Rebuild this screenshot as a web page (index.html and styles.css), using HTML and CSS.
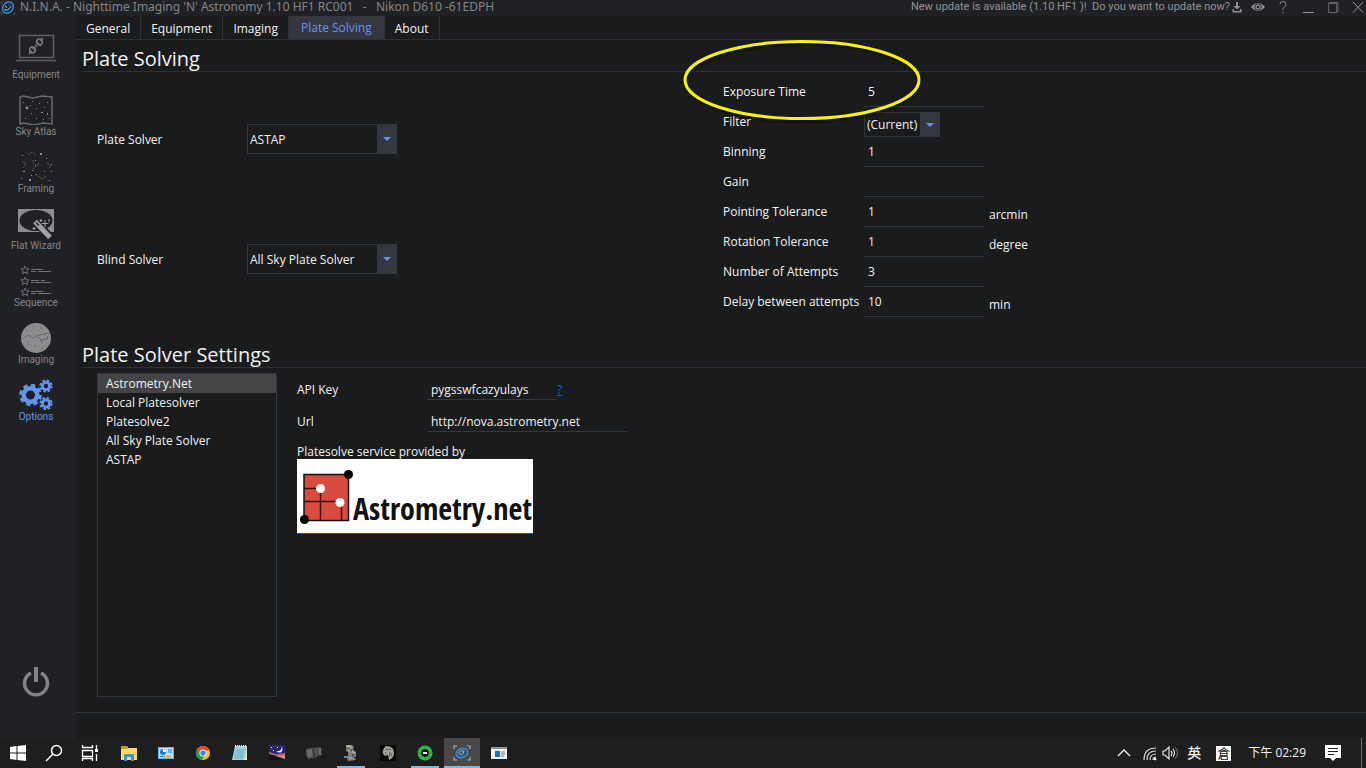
FILE: index.html
```html
<!DOCTYPE html>
<html lang="en">
<head>
<meta charset="utf-8">
<title>N.I.N.A. - Options</title>
<link rel="stylesheet" href="styles.css">
</head>
<body>
<header class="titlebar">
  <svg class="app-icon" viewBox="0 0 16 14" aria-hidden="true"><ellipse cx="8" cy="6.500" rx="5" ry="6" transform="rotate(40 8 6.500)" fill="#10283c" stroke="#3f87c6" stroke-width="1.500"/><path d="M4.500 8.500q3 2 6.500-3M5 5l2 1.500M9 3.500l1 1" stroke="#b9d8ee" fill="none"/><path d="M1 10v3h3M15 11v2h-2M1 3V1h2" stroke="#3a5163" fill="none"/></svg>
  <span class="app-title">N.I.N.A. - Nighttime Imaging 'N' Astronomy 1.10 HF1 RC001 &nbsp; - &nbsp; Nikon D610 -61EDPH</span>
  <span class="update-text">New update is available (1.10 HF1 )!&nbsp; Do you want to update now?</span>
  <button class="title-btn download" aria-label="Download update"><svg viewBox="0 0 10 12"><path d="M4 1h2v4h2.500L5 8.500 1.500 5H4zM.500 8H2v2h6V8h1.500v3.500h-9z" fill="#909193"/></svg></button>
  <div class="window-btns">
    <button class="title-btn" aria-label="Toggle theme"><svg viewBox="0 0 16 12"><path d="M1 6q7-8 14 0-7 8-14 0z" fill="#929395"/><circle cx="8" cy="6" r="3.200" fill="none" stroke="#202125"/><circle cx="8" cy="6" r="1.300" fill="#202125"/></svg></button>
    <button class="title-btn" aria-label="Help"><svg viewBox="0 0 16 12"><path d="M5 3.500Q5 .500 8 .500t3 3q0 1.500-1.700 2.700T8 9M8 10.500V12" fill="none" stroke="#8a8b8d"/></svg></button>
    <button class="title-btn" aria-label="Minimize"><svg viewBox="0 0 16 12"><path d="M3 11.500h11" stroke="#929395"/></svg></button>
    <button class="title-btn" aria-label="Restore"><svg viewBox="0 0 16 12"><path d="M3.500 2.500h8v9h-8zM3.500 2.500l1-1h8.500v9l-1.500 1M12 2.500l1-1" fill="none" stroke="#626366"/></svg></button>
    <button class="title-btn" aria-label="Close"><svg viewBox="0 0 16 12"><path d="M3 1l10 10.500M13 1L3 11.500" stroke="#929395"/></svg></button>
  </div>
</header>

<div class="workspace">
  <nav class="sidebar" aria-label="Sections">
    <button class="side-item"><svg viewBox="0 0 40 36"><path d="M3.500 3.500h34v22h-34zM0 28.500h40" fill="none" stroke="#606164" stroke-width="1.500"/><path d="M13 22l3-3M27 6l-3 3" stroke="#77787a" stroke-width="1.600"/><g fill="none" stroke="#77787a" stroke-width="1.500"><circle cx="16.500" cy="18" r="2.900"/><circle cx="23.500" cy="10" r="2.900"/></g><path d="M15 14.500l5 4.500M20 9l5 5M19 13l2 2" stroke="#77787a" stroke-width="1.200"/></svg><span>Equipment</span></button>
    <button class="side-item"><svg viewBox="0 0 40 36"><path d="M4 8l3-1 10 2 9-2 10 1v27l-9-1-9 2-10-2-4 1z" fill="none" stroke="#68696b" stroke-width="1.500"/><g fill="#8a8b8d"><circle cx="11" cy="19" r="1.400"/><path d="M7 13h1v1H7zM16 12h1v1h-1zM23 14h1v1h-1zM31 13h1v1h-1zM28 18h1v1h-1zM20 19h1v1h-1zM15 24h1v1h-1zM25 23h2v1h-2zM31 24h1v2h-1zM9 29h1v1H9zM20 29h1v1h-1zM27 30h1v1h-1zM33 29h1v1h-1zM14 16h1v1h-1z"/></g></svg><span>Sky Atlas</span></button>
    <button class="side-item"><svg viewBox="0 0 40 36"><path d="M12 9l4-3 4 3M6 15l4 3-3 4M17 17l3 3 4-3M20 20l-3 3M31 17l4 3-3 3M22 30l4 3 4-3M17 16v-2" fill="none" stroke="#626366" stroke-dasharray="2 1"/><g fill="#8d8e90"><path d="M24 7h2v2h-2zM6 9h1v1H6zM30 12h1v1h-1zM35 18h1v1h-1zM7 25h2v1H7zM16 24h1v1h-1zM28 25h1v1h-1zM35 25h1v1h-1zM5 32h1v1H5zM13 33h2v2h-2zM33 34h1v1h-1zM15 29h1v1h-1zM20 28h1v1h-1zM19 14h1v1h-1z"/></g></svg><span>Framing</span></button>
    <button class="side-item"><svg viewBox="0 0 40 36"><path d="M2 6h36v23H2z" fill="#8c8d8f"/><ellipse cx="20" cy="17.500" rx="16.500" ry="10.500" fill="#202125"/><path d="M21 20l13 14" stroke="#202125" stroke-width="8"/><path d="M19 18.500l15 16" stroke="#a1a2a3" stroke-width="5"/><path d="M20 19.500l3 3" stroke="#202125" stroke-width="1.500"/><path d="M29 17v7M25.500 20.500h7M25 16v3M23.500 17.500h3M33 16v3M18 24v3M16.500 25.500h3" stroke="#a1a2a3"/></svg><span>Flat Wizard</span></button>
    <button class="side-item"><svg viewBox="0 0 40 36"><defs><path id="star" d="M0-4l1.100 2.700 3 .2-2.300 1.900.8 2.900L0 2.200l-2.600 1.500.8-2.900-2.300-1.900 3-.2z"/></defs><g fill="none" stroke="#707173"><use href="#star" x="9" y="10"/><use href="#star" x="9" y="21"/><use href="#star" x="9" y="32"/><path d="M15 9.500h12M15 11.500h5M22 11.500h13M15 20.500h8M25 20.500h4M15 22.500h3M19 22.500h16M15 31.500h12M15 33.500h5M22 33.500h13"/></g></svg><span>Sequence</span></button>
    <button class="side-item"><svg viewBox="0 0 40 36"><circle cx="20" cy="21" r="15" fill="#8b8c8e"/><path d="M7 22l5-4 5 3 6-3 10-2M22 20l3 3 6-1 1-3M25 23l1 3M12 25v3M18 29h2M24 11h2M16 10h1M10 14h1M25 32h2" fill="none" stroke="#626366" stroke-width=".9"/></svg><span>Imaging</span></button>
    <button class="side-item is-active"><svg viewBox="0 0 40 36"><g fill="none" stroke="#6495ed"><circle cx="14.500" cy="21" r="6.800" stroke-width="4.500"/><circle cx="14.500" cy="21" r="9.800" stroke-width="3" stroke-dasharray="4.400 3.300"/><circle cx="30" cy="12" r="3.600" stroke-width="2.800"/><circle cx="30" cy="12" r="5.600" stroke-width="2" stroke-dasharray="2.500 1.900"/><circle cx="30" cy="29.500" r="3.600" stroke-width="2.800"/><circle cx="30" cy="29.500" r="5.600" stroke-width="2" stroke-dasharray="2.500 1.900"/></g></svg><span>Options</span></button>
    <button class="power" aria-label="Power"><svg viewBox="0 0 28 32"><path d="M9 7a11.500 11.500 0 1 0 10 0" fill="none" stroke="#828385" stroke-width="3.500"/><path d="M14 1v15" stroke="#828385" stroke-width="4"/></svg></button>
  </nav>

  <main class="page">
    <div class="tabs" role="tablist">
      <button class="tab" role="tab">General</button>
      <button class="tab" role="tab">Equipment</button>
      <button class="tab" role="tab">Imaging</button>
      <button class="tab is-active" role="tab" aria-selected="true">Plate Solving</button>
      <button class="tab" role="tab">About</button>
    </div>

    <section class="section">
      <h2 class="heading">Plate Solving</h2>
      <div class="solving">
        <div class="solvers">
          <div class="solver-row">
            <label for="plate-solver">Plate Solver</label>
            <span class="combo"><select id="plate-solver"><option>ASTAP</option></select></span>
          </div>
          <div class="solver-row">
            <label for="blind-solver">Blind Solver</label>
            <span class="combo"><select id="blind-solver"><option>All Sky Plate Solver</option></select></span>
          </div>
        </div>
        <div class="params">
          <div class="param"><label for="exposure">Exposure Time</label><input id="exposure" value="5"></div>
          <div class="param"><label for="filter">Filter</label><span class="combo combo-small"><select id="filter"><option>(Current)</option></select></span></div>
          <div class="param"><label for="binning">Binning</label><input id="binning" value="1"></div>
          <div class="param"><label for="gain">Gain</label><input id="gain" value=""></div>
          <div class="param"><label for="pointing">Pointing Tolerance</label><input id="pointing" value="1"><span class="unit">arcmin</span></div>
          <div class="param"><label for="rotation">Rotation Tolerance</label><input id="rotation" value="1"><span class="unit">degree</span></div>
          <div class="param"><label for="attempts">Number of Attempts</label><input id="attempts" value="3"></div>
          <div class="param"><label for="delay">Delay between attempts</label><input id="delay" value="10"><span class="unit">min</span></div>
          <svg class="callout" viewBox="0 0 242 86" aria-hidden="true"><ellipse cx="121" cy="42" rx="117" ry="38.500" fill="none" stroke="#f8f500" stroke-width="3"/></svg>
        </div>
      </div>
    </section>

    <section class="section section-fill">
      <h2 class="heading">Plate Solver Settings</h2>
      <div class="settings">
        <ul class="solver-list">
          <li class="is-selected"><button>Astrometry.Net</button></li>
          <li><button>Local Platesolver</button></li>
          <li><button>Platesolve2</button></li>
          <li><button>All Sky Plate Solver</button></li>
          <li><button>ASTAP</button></li>
        </ul>
        <div class="solver-form">
          <div class="setting"><label for="api-key">API Key</label><input class="key-input" id="api-key" value="pygsswfcazyulays"><a class="help-link" href="#">?</a></div>
          <div class="setting"><label for="url">Url</label><input class="url-input" id="url" value="http://nova.astrometry.net"></div>
          <p class="credit">Platesolve service provided by</p>
          <a class="logo" href="#">
            <svg viewBox="0 0 56 73" aria-hidden="true"><path d="M7 15.500h44.500v46H7z" fill="#d94b3e" stroke="#111" stroke-width="1.500"/><path d="M7 29.500h16M23.500 29v32M7 42.500h36M44.500 43v18" stroke="#3c0d0a" stroke-width="1.500"/><circle cx="51.500" cy="15.500" r="4.500"/><circle cx="7.500" cy="60.500" r="4.500"/><circle cx="23.500" cy="29.500" r="4.500" fill="#fff"/><circle cx="43" cy="43.500" r="4.500" fill="#fff"/></svg>
            <span>Astrometry.net</span>
          </a>
        </div>
      </div>
    </section>
    <footer class="statusbar"></footer>
  </main>
</div>

<footer class="taskbar">
  <button class="task" aria-label="Start"><svg viewBox="0 0 24 24"><path d="M4 6l6.500-1v6.500H4zM11.500 5L20 4v7.500h-8.500zM4 12.500h6.500V19L4 18zM11.500 12.500H20V20l-8.500-1z" fill="#fff"/></svg></button>
  <button class="task" aria-label="Search"><svg viewBox="0 0 24 24"><circle cx="14.500" cy="9.500" r="5" fill="none" stroke="#fff" stroke-width="1.500"/><path d="M11 13l-7 7" stroke="#fff" stroke-width="1.500"/></svg></button>
  <button class="task" aria-label="Task view"><svg viewBox="0 0 24 24"><path d="M4.500 4v2.500h10V4M4.500 9.500h10v6h-10zM4.500 20v-2.500h10V20M18.500 4v5M18.500 13v7" fill="none" stroke="#fff" stroke-width="1.300"/><path d="M17 8h3v3h-3z" fill="#fff"/></svg></button>
  <div class="apps">
    <button class="task" aria-label="File Explorer"><svg viewBox="0 0 24 24"><path d="M4 5h6l1 2h9v12H4z" fill="#ffd76a"/><path d="M4 5h6l1 2-1 1H4z" fill="#d69a18"/><path d="M7 20v-7h10v7h-3v-4h-4v4z" fill="#3b93d9"/></svg></button>
    <button class="task" aria-label="Control Panel"><svg viewBox="0 0 24 24"><path d="M4 6h16v12H4z" fill="#58b7ef"/><path d="M5 7h14v10H5z" fill="#b6e2fa"/><circle cx="9" cy="11" r="3" fill="#1880cb"/><path d="M9 11V8a3 3 0 0 1 3 3z" fill="#fff"/><path d="M14 9h4M14 11h4M6 15.500h5" stroke="#1880cb"/><path d="M12 15.500h5" stroke="#ff9c23" stroke-width="2"/></svg></button>
    <button class="task" aria-label="Chrome"><svg viewBox="0 0 24 24"><circle cx="12" cy="12" r="7" fill="#fbc116"/><path d="M12 12L5.900 8.500A7 7 0 0 1 18.100 8.500z" fill="#de4a3a"/><path d="M12 12L5.900 8.500A7 7 0 0 0 11 19l2.500-5z" fill="#249956"/><circle cx="12" cy="12" r="3.600" fill="#fff"/><circle cx="12" cy="12" r="2.700" fill="#427ff0"/></svg></button>
    <button class="task" aria-label="Notepad"><svg viewBox="0 0 24 24"><path d="M7 5h12v14H4z" fill="#9bd3df"/><path d="M19 6v13h-3z" fill="#eee6c9"/><path d="M7 5h12" stroke="#eee" stroke-width="2" stroke-dasharray="1 1"/><path d="M8 9h9M7.500 11h9M7 13h9M6.500 15h9M6 17h9" stroke="#629eac" stroke-width=".7"/></svg></button>
    <button class="task" aria-label="Stellarium"><svg viewBox="0 0 24 24"><path d="M4 4h16v15H4z" fill="#2c246d"/><path d="M4 11l7 2 9-1v3l-9 2-7-2z" fill="#9d6391"/><path d="M4 13l7 2 9 4H4z" fill="#151313"/><path d="M11 15l9-1v4z" fill="#dc8c69"/><path d="M16.500 5q1 6-5.500 5 4 3 6 0 1-2-.5-5z" fill="#fff"/><path d="M6 6h1v1H6zM8 9h1v1H8zM12 6h1v1h-1z" fill="#fff"/></svg></button>
    <button class="task" aria-label="Camera"><svg viewBox="0 0 24 24"><path d="M4 8l5-1 10-1 1 8-4 1-3 2-7 1-2-4z" fill="#4d504e"/><path d="M5 9l6-1v7l-5 1zM17 7h2v6l-2 1z" fill="#686b69"/><path d="M11 8l1 8" stroke="#363937" stroke-width="2"/></svg></button>
    <button class="task is-running" aria-label="Mount"><svg viewBox="0 0 24 24"><path d="M7 4h6l2 2-1 3 3 2v5h-2l2 3-8 1-1-3H5v-2h4v-4l-2-1z" fill="#85817c"/><path d="M8 5h4v2H8zM9 10h4l3 2M10 17h5" fill="#bbb8b0" stroke="#bbb8b0"/><path d="M12 8v3M14 13v4M7 7h4" stroke="#383532"/></svg></button>
    <button class="task" aria-label="Moon"><svg viewBox="0 0 24 24"><path d="M4 4h16v16H4z" fill="#050505"/><path d="M10 5q8 0 8 7 0 5-5 7l-1-5-3 1-2-2q-1-5 3-8z" fill="#a2a19c"/><path d="M10 8l2 1 3-1M14 11l-1 5M16 12l-1 3M9 11l2 2" fill="none" stroke="#454540" stroke-width=".8"/></svg></button>
    <button class="task is-running" aria-label="PHD2"><svg viewBox="0 0 24 24"><circle cx="12" cy="12" r="7.500" fill="#36b64c"/><path d="M12 5v14M5 12h14M7 7l10 10M17 7L7 17" stroke="#2b973d"/><circle cx="12" cy="12" r="3.800" fill="#090d09"/><path d="M10 12h4" stroke="#e4eee4" stroke-width="2"/></svg></button>
    <button class="task is-running is-current" aria-label="N.I.N.A."><svg viewBox="0 0 24 24"><path d="M4 8V5h3M17 5h3v3M4 16v3h3M17 19h3v-3" fill="none" stroke="#aab0b4" stroke-width="1.200"/><ellipse cx="12" cy="12" rx="6" ry="4.500" transform="rotate(-20 12 12)" fill="#38536a" stroke="#4388c3" stroke-width="1.500"/><path d="M9 13q0-4 5-3-1 5-4 3" fill="none" stroke="#8dbde0"/></svg></button>
    <button class="task" aria-label="Application"><svg viewBox="0 0 24 24"><path d="M4 6h16v12H4z" fill="#f3f3f3"/><path d="M4 6h16v2H4z" fill="#999"/><path d="M8 10h5v6H8z" fill="#0877d2"/><path d="M14 11h4M14 13h4M14 15h3" stroke="#777"/></svg></button>
  </div>
  <div class="tray">
    <button class="tray-btn" aria-label="Hidden icons"><svg viewBox="0 0 20 20"><path d="M4 13l6-6 6 6" fill="none" stroke="#eee" stroke-width="1.400"/></svg></button>
    <button class="tray-btn wifi" aria-label="Network"><svg viewBox="0 0 20 20"><g fill="none" stroke="#d8d8d8" stroke-width="1.200"><path d="M4 17Q4 5 16 5M7 17q0-9 9-9M10 17q0-6 6-6M13 17q0-3 3-3"/></g><circle cx="15" cy="16" r="1.300" fill="#fff"/></svg></button>
    <button class="tray-btn" aria-label="Volume"><svg viewBox="0 0 20 20"><path d="M3 8h2l4-4v12l-4-4H3zM11 8q2 2 0 5M13 6q3 4 0 8" fill="none" stroke="#eee" stroke-width="1.100"/><path d="M15 4q5 6 0 12" fill="none" stroke="#777"/></svg></button>
    <span class="ime">英</span>
    <span class="ime-mode">倉</span>
    <span class="clock">下午 02:29</span>
    <button class="notify" aria-label="Notifications"><svg viewBox="0 0 20 20"><path d="M2 2h16v13h-5l-3 3-3-3H2z" fill="#fff"/><path d="M5 5.500h10M5 8.500h10M5 11.500h6" stroke="#222"/></svg></button>
    <span class="peek"></span>
  </div>
</footer>
</body>
</html>
```
FILE: styles.css
```css
* { box-sizing: border-box; }
body {
  margin: 0;
  min-height: 100vh;
  display: flex;
  flex-direction: column;
  background: #1a1b1d;
  color: #f2f2f2;
  font: 12px/16px "Open Sans", "Noto Sans", "Noto Sans CJK TC", sans-serif;
}
button, input, select { font: inherit; color: inherit; }
button { margin: 0; padding: 0; border: 0; background: none; }
svg { display: block; }
h2, p, ul { margin: 0; padding: 0; }

.titlebar {
  display: flex;
  align-items: center;
  height: 16px;
  line-height: 14px;
  background: #202125;
  color: #858688;
}
.app-icon { width: 16px; height: 14px; margin-right: 4px; }
.app-title { margin-right: auto; padding-bottom: 2px; font-family: "Noto Sans", sans-serif; }
.update-text { font: 400 11px/14px Roboto, sans-serif; padding-bottom: 2px; color: #929395; }
.download svg { width: 10px; height: 12px; margin: 0 8px 2px 2px; }
.window-btns { display: flex; gap: 9px; padding-bottom: 2px; }
.window-btns svg { width: 16px; height: 12px; }

.workspace { flex: 1; display: flex; }
.sidebar {
  width: 76px;
  display: flex;
  flex-direction: column;
  align-items: center;
  padding: 8px 4px 40px 0;
  background: #202125;
}
.side-item {
  width: 72px;
  height: 57px;
  display: flex;
  flex-direction: column;
  align-items: center;
  justify-content: flex-end;
  color: #858688;
  font: 10px/13px Roboto, sans-serif;
}
.side-item svg { width: 40px; height: 36px; }
.side-item.is-active { color: #6495ed; }
.power { margin-top: auto; }
.power svg { width: 28px; height: 32px; }

.page { flex: 1; display: flex; flex-direction: column; min-width: 0; }
.tabs { display: flex; height: 24px; border-bottom: 1px solid #2f3034; }
.tab { padding: 2px 10px 0; border-right: 1px solid #303135; }
.tab.is-active { padding: 0 12px; background: #353740; color: #6495ed; }

.section { display: flex; flex-direction: column; padding-left: 6px; }
.section-fill { flex: 1; }
.heading {
  padding: 6px 0 0;
  border-bottom: 1px solid #2f3034;
  font-size: 20px;
  font-weight: 400;
  line-height: 25px;
}
.solving {
  display: grid;
  grid-template-columns: 1fr 1fr;
  padding: 5px 0 17px;
}
.solvers { padding: 2px 0 0 15px; }
.solver-row { display: flex; align-items: center; height: 120px; }
.solver-row label { width: 150px; padding-top: 2px; }

.combo { position: relative; display: flex; width: 150px; height: 30px; }
.combo select {
  appearance: none;
  width: 100%;
  padding: 1px 20px 0 2px;
  border: 1px solid #353740;
  border-radius: 0;
  background: linear-gradient(#353740, #353740) right / 19px 100% no-repeat #1a1b1d;
}
.combo::after {
  content: "";
  position: absolute;
  right: 6px;
  top: calc(50% - 2px);
  border: 4px solid transparent;
  border-top-color: #6495ed;
  border-bottom: 0;
}
.combo-small { width: 76px; height: 25px; margin-top: 5px; }

.params { position: relative; margin-left: -1px; }
.param {
  display: grid;
  grid-template-columns: 141px 120px 1fr;
  align-items: center;
  height: 30px;
}
input {
  width: 100%;
  height: 30px;
  padding: 0 4px;
  border: 0;
  border-bottom: 1px solid #353740;
  border-radius: 0;
  outline: 0;
  background: none;
}
.unit { padding: 6px 0 0 5px; }
.callout {
  position: absolute;
  left: -42px;
  top: -39px;
  width: 242px;
  height: 86px;
  filter: drop-shadow(1px 2px 1px #0008);
  pointer-events: none;
}

.settings { flex: 1; display: flex; gap: 20px; padding: 5px 0 15px 15px; }
.solver-list { width: 180px; border: 1px solid #353740; list-style: none; }
.solver-list li { height: 19px; padding-left: 8px; }
.solver-list .is-selected { background: #444446; }
.solver-list button { line-height: 19px; }
.solver-form { padding-top: 1px; }
.setting { display: flex; align-items: center; height: 32px; }
.setting label { width: 130px; }
.setting input { height: 20px; }
.setting .key-input { width: 130px; }
.setting .url-input { width: 200px; }
.help-link { color: #0a64bc; }
.credit { padding-top: 6px; height: 21px; }
.logo {
  display: flex;
  width: 236px;
  height: 75px;
  border-bottom: 1px solid #0a5aa8;
  background: #fff;
  color: #111;
  text-decoration: none;
}
.logo svg { width: 56px; height: 73px; }
.logo span {
  padding-top: 31px;
  font: 700 30px/38px "Open Sans Condensed", "Liberation Sans Narrow", "Roboto Condensed", sans-serif;
}
.statusbar { height: 26px; border-top: 1px solid #353740; }

.taskbar { display: flex; height: 30px; background: #1e1e1e; }
.task {
  display: flex;
  align-items: center;
  justify-content: center;
  width: 36px;
  height: 30px;
}
.task svg { width: 24px; height: 24px; }
.apps { display: flex; gap: 1px; padding-left: 3px; }
.is-running { background: linear-gradient(#76b9ed, #76b9ed) bottom / 28px 2px no-repeat; }
.is-current {
  background-color: #484848;
  background-size: 100% 2px;
}
.tray { display: flex; align-items: center; margin-left: auto; }
.tray-btn svg { width: 20px; height: 20px; }
.wifi { margin-left: 6px; }
.ime { margin: 0 15px 0 7px; font-size: 14px; font-weight: 500; }
.ime-mode {
  width: 15px;
  height: 15px;
  background: #fff;
  color: #111;
  font-size: 13px;
  line-height: 14px;
  text-align: center;
}
.clock { margin-left: 17px; }
.notify svg { width: 20px; height: 20px; }
.notify { margin: 0 18px 0 17px; }
.peek { width: 5px; height: 30px; border-left: 1px solid #666; }
```
